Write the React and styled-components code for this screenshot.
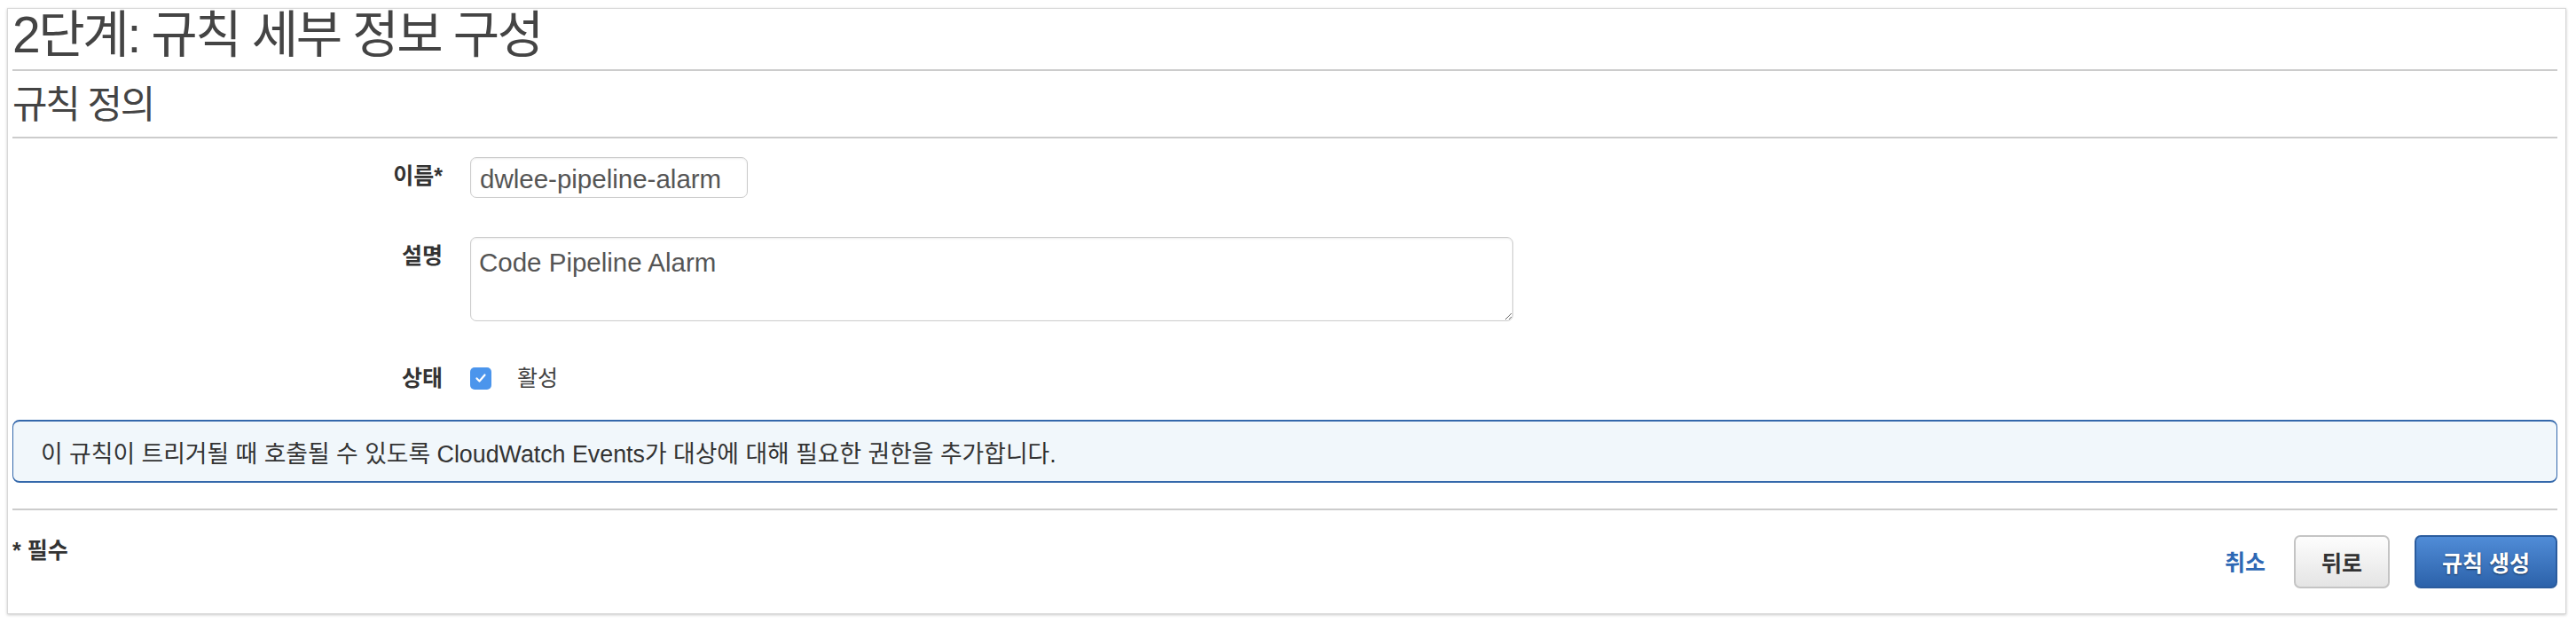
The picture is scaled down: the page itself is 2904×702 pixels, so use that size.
import React from "react";
import styled, { createGlobalStyle } from "styled-components";

const GlobalStyle = createGlobalStyle`
  html, body {
    margin: 0;
    padding: 0;
    background: #ffffff;
  }
  body {
    font-family: "Liberation Sans", "Noto Sans CJK KR", Arial, sans-serif;
    color: #444;
  }
`;

const App = () => {
  return (
    <Page>
      <GlobalStyle />
      <Card>
        <Title>2단계: 규칙 세부 정보 구성</Title>
        <SectionTitle>규칙 정의</SectionTitle>

        <Form>
          <Row $mt={0}>
            <Label $pt={6}>이름*</Label>
            <TextInput defaultValue="dwlee-pipeline-alarm" />
          </Row>
          <Row $mt={44}>
            <Label $pt={6}>설명</Label>
            <TextArea defaultValue="Code Pipeline Alarm" />
          </Row>
          <Row $mt={49} $center>
            <Label $pt={0}>상태</Label>
            <CheckWrap>
              <CheckBox>
                <svg width="16" height="16" viewBox="0 0 16 16">
                  <path d="M3.5 8.4l3 3.1 6-7" fill="none" stroke="#fff" strokeWidth="2.2" strokeLinecap="round" strokeLinejoin="round" />
                </svg>
              </CheckBox>
              <CheckText>활성</CheckText>
            </CheckWrap>
          </Row>
        </Form>

        <Notice>
          이 규칙이 트리거될 때 호출될 수 있도록 CloudWatch Events가 대상에 대해 필요한 권한을 추가합니다.
        </Notice>

        <Footer>
          <Required>* 필수</Required>
          <Actions>
            <CancelLink href="#">취소</CancelLink>
            <Button>뒤로</Button>
            <Button $primary>규칙 생성</Button>
          </Actions>
        </Footer>
      </Card>
    </Page>
  );
};

export default App;

const Page = styled.div`
  height: 702px;
  box-sizing: border-box;
  padding: 9px 11px 10px 8px;
`;

const Card = styled.div`
  height: 100%;
  box-sizing: border-box;
  background: #fff;
  border: 1px solid #d8d8d8;
  box-shadow: 0 1px 3px rgba(0, 0, 0, 0.22);
  padding: 0 9px 0 5px;
`;

const Title = styled.h1`
  margin: 0;
  font-size: 57px;
  font-weight: 400;
  letter-spacing: -2.4px;
  line-height: 58px;
  padding-bottom: 10px;
  border-bottom: 2px solid #cccccc;
  color: #444;
  white-space: nowrap;
`;

const SectionTitle = styled.h2`
  margin: 0;
  font-size: 43px;
  font-weight: 400;
  letter-spacing: -2.2px;
  line-height: 56px;
  padding: 10px 0 8px;
  border-bottom: 2px solid #cccccc;
  color: #444;
`;

const Form = styled.div`
  padding-top: 21px;
`;

const Row = styled.div`
  display: grid;
  grid-template-columns: 485px 1fr;
  column-gap: 31px;
  align-items: ${(p) => (p.$center ? "center" : "start")};
  margin-top: ${(p) => p.$mt}px;
`;

const Label = styled.div`
  text-align: right;
  font-weight: 700;
  font-size: 25px;
  line-height: 30px;
  padding-top: ${(p) => p.$pt}px;
  color: #333;
`;

const TextInput = styled.input`
  width: 313px;
  height: 46px;
  box-sizing: border-box;
  border: 1.5px solid #cccccc;
  border-radius: 7px;
  box-shadow: inset 0 1px 2px rgba(0, 0, 0, 0.08);
  padding: 4px 10px 0;
  font-family: "Liberation Sans", Arial, sans-serif;
  font-size: 29.5px;
  color: #555;
  outline: none;
`;

const TextArea = styled.textarea`
  width: 1176px;
  height: 95px;
  box-sizing: border-box;
  border: 1.5px solid #cccccc;
  border-radius: 7px;
  box-shadow: inset 0 1px 2px rgba(0, 0, 0, 0.08);
  padding: 10px 9px;
  font-family: "Liberation Sans", Arial, sans-serif;
  font-size: 29.5px;
  line-height: 36px;
  color: #555;
  resize: vertical;
  outline: none;
`;

const CheckWrap = styled.div`
  display: flex;
  align-items: center;
`;

const CheckBox = styled.span`
  width: 24px;
  height: 25px;
  border-radius: 5px;
  background: #4b95ec;
  display: flex;
  align-items: center;
  justify-content: center;
`;

const CheckText = styled.span`
  margin-left: 29px;
  font-size: 25px;
  line-height: 30px;
  color: #444;
`;

const Notice = styled.div`
  margin-top: 32px;
  border-style: solid;
  border-color: #3468ab;
  border-width: 2px 1.5px;
  border-radius: 8px;
  background: #f1f7fb;
  padding: 22px 31px 15px;
  font-size: 26.8px;
  line-height: 30px;
  color: #333;
`;

const Footer = styled.div`
  margin-top: 29px;
  border-top: 2px solid #cccccc;
  padding-top: 28px;
  display: flex;
  justify-content: space-between;
  align-items: flex-start;
`;

const Required = styled.div`
  padding-top: 2px;
  font-weight: 700;
  font-size: 25px;
  line-height: 30px;
  color: #333;
`;

const Actions = styled.div`
  display: flex;
  align-items: center;
  gap: 28px;
`;

const CancelLink = styled.a`
  margin-right: 4px;
  padding-top: 2px;
  font-weight: 700;
  font-size: 25px;
  line-height: 30px;
  color: #2e68b4;
  text-decoration: none;
`;

const Button = styled.button`
  height: 60px;
  box-sizing: border-box;
  padding: 0 29px;
  border-radius: 7px;
  font-family: "Liberation Sans", "Noto Sans CJK KR", Arial, sans-serif;
  font-weight: 700;
  font-size: 25px;
  cursor: pointer;
  border: 2px solid ${(p) => (p.$primary ? "#2b5c9e" : "#c4c4c4")};
  background: ${(p) =>
    p.$primary
      ? "linear-gradient(#508cd7, #2c62aa)"
      : "linear-gradient(#fdfdfd, #e4e4e4)"};
  color: ${(p) => (p.$primary ? "#fff" : "#333")};
  text-shadow: ${(p) => (p.$primary ? "0 1px 2px rgba(0, 0, 0, 0.55)" : "none")};
`;
